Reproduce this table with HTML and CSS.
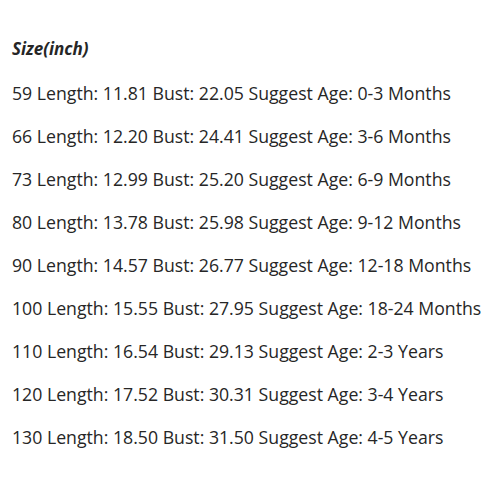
FILE: index.html
```html
<!DOCTYPE html>
<html>
<head>
<meta charset="utf-8">
<link rel="stylesheet" href="styles.css">
</head>
<body>
<div class="sheet">
  <p class="title">Size(inch)</p>
  <p class="row">59 Length: 11.81 Bust: 22.05 Suggest Age: 0-3 Months</p>
  <p class="row">66 Length: 12.20 Bust: 24.41 Suggest Age: 3-6 Months</p>
  <p class="row">73 Length: 12.99 Bust: 25.20 Suggest Age: 6-9 Months</p>
  <p class="row">80 Length: 13.78 Bust: 25.98 Suggest Age: 9-12 Months</p>
  <p class="row">90 Length: 14.57 Bust: 26.77 Suggest Age: 12-18 Months</p>
  <p class="row">100 Length: 15.55 Bust: 27.95 Suggest Age: 18-24 Months</p>
  <p class="row">110 Length: 16.54 Bust: 29.13 Suggest Age: 2-3 Years</p>
  <p class="row">120 Length: 17.52 Bust: 30.31 Suggest Age: 3-4 Years</p>
  <p class="row">130 Length: 18.50 Bust: 31.50 Suggest Age: 4-5 Years</p>
</div>
</body>
</html>
```
FILE: styles.css
```css
html, body {
  margin: 0;
  padding: 0;
  background: #ffffff;
}
.sheet {
  padding: 27px 0 0 12px;
  font-family: "Open Sans", "Noto Sans", sans-serif;
  color: #262626;
  font-size: 17.7px;
}
.sheet p {
  margin: 0;
  height: 43px;
  line-height: 43px;
  white-space: nowrap;
}
.sheet .title {
  font-weight: 700;
  font-style: italic;
  font-size: 17px;
  height: 45px;
}
```
